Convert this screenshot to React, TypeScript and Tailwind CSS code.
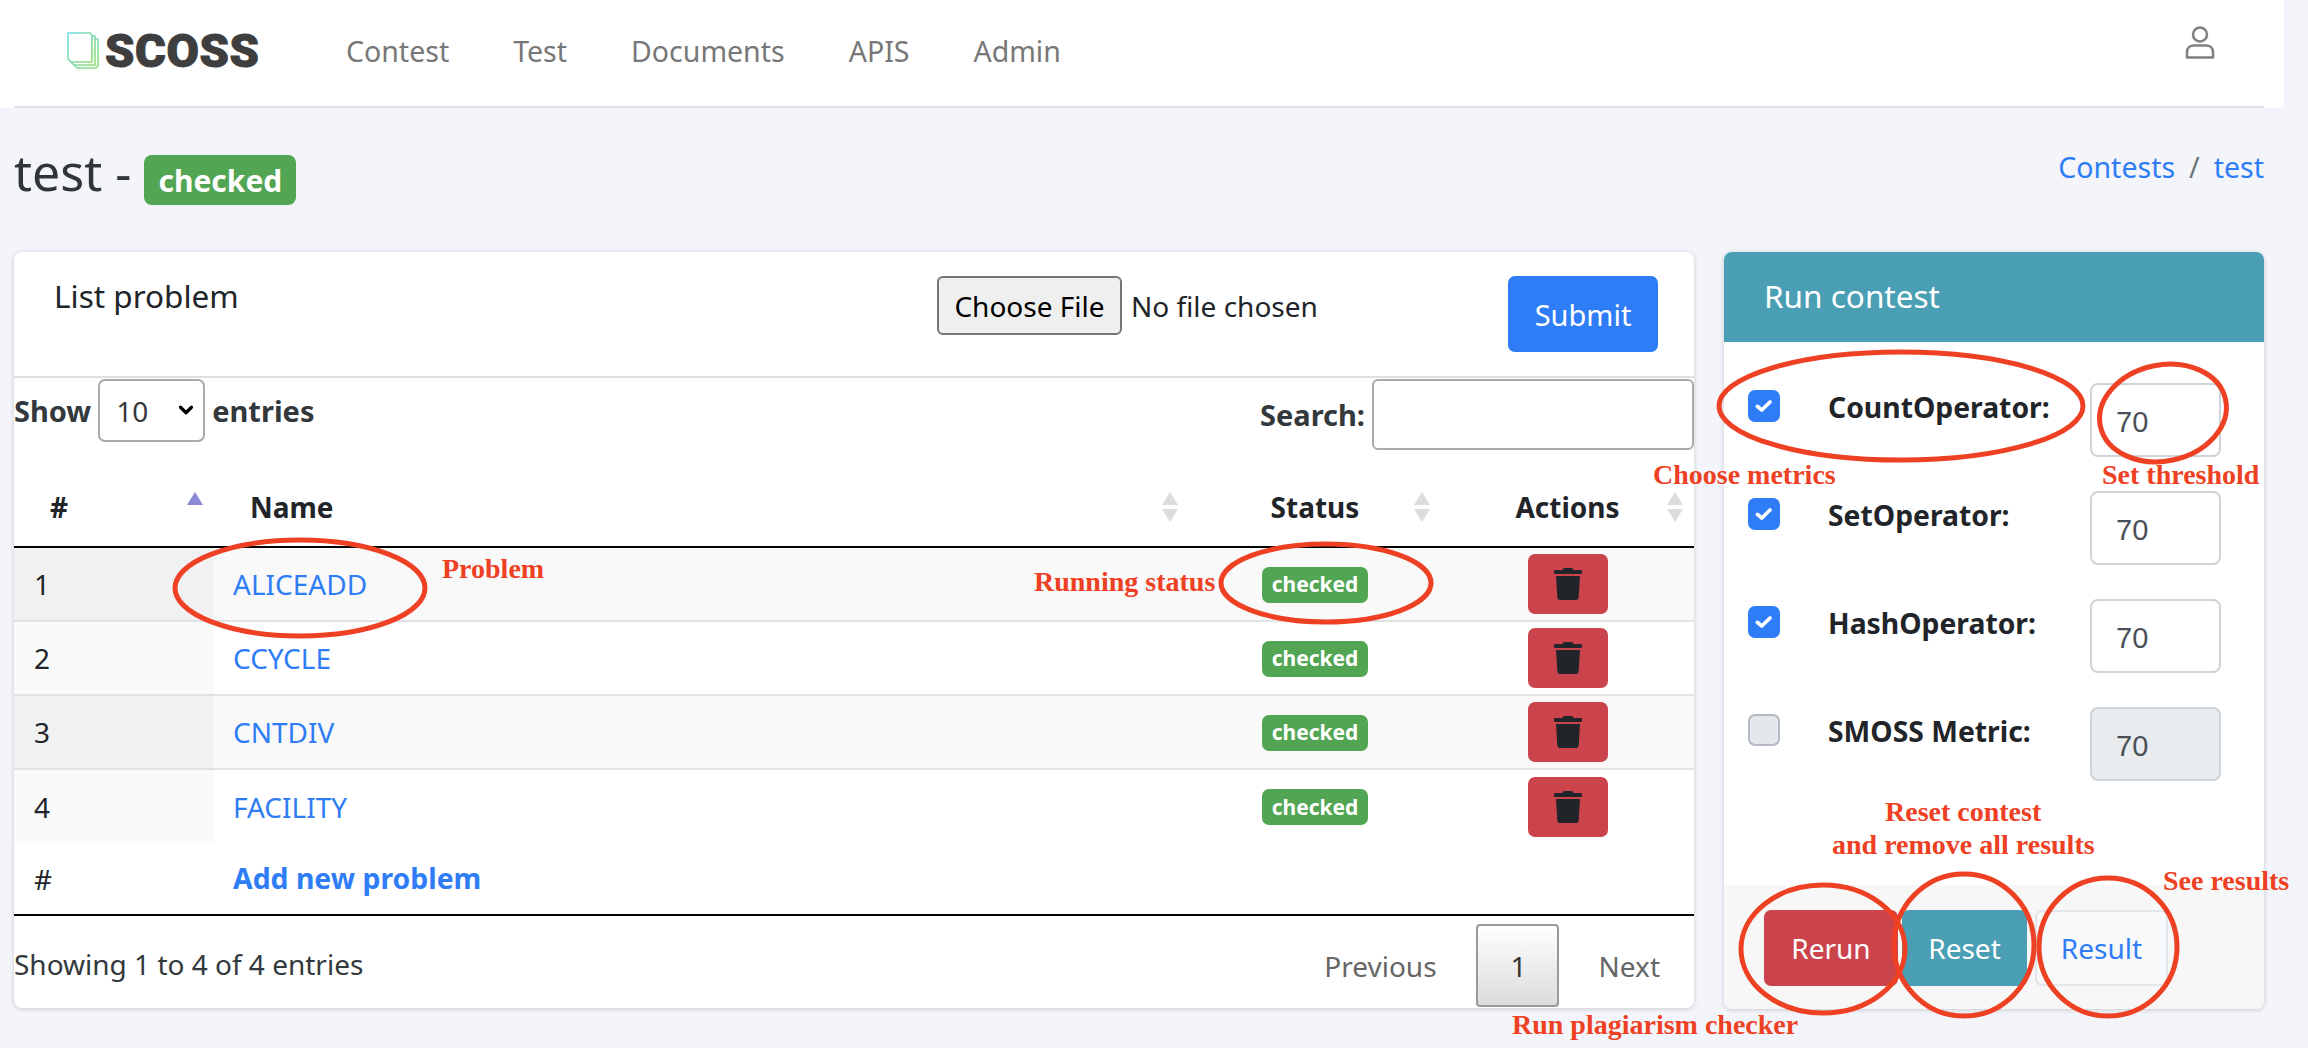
import React from 'react';
import { FaTrash } from 'react-icons/fa';
import { ChevronDown } from 'lucide-react';

const problems = [
  { id: 1, name: 'ALICEADD' },
  { id: 2, name: 'CCYCLE' },
  { id: 3, name: 'CNTDIV' },
  { id: 4, name: 'FACILITY' },
];

const metrics = [
  { label: 'CountOperator:', checked: true },
  { label: 'SetOperator:', checked: true },
  { label: 'HashOperator:', checked: true },
  { label: 'SMOSS Metric:', checked: false },
];

const navItems = ['Contest', 'Test', 'Documents', 'APIS', 'Admin'];

const Logo = () => (
  <div className="flex items-center gap-[6px]">
    <svg width="32" height="37" viewBox="0 0 32 37" fill="none" strokeWidth="1.6">
      <defs>
        <linearGradient id="logoStroke" x1="0" y1="0" x2="1" y2="1">
          <stop offset="0" stopColor="#72d9e6" />
          <stop offset="1" stopColor="#8edf72" />
        </linearGradient>
      </defs>
      <path d="M1 1H23L25 3V30H4L1 27Z" stroke="url(#logoStroke)" />
      <path d="M25 4H28V33H7L4 30" stroke="url(#logoStroke)" />
      <path d="M28 7H31V34L29 36H10L7 33" stroke="url(#logoStroke)" />
    </svg>
    <span className="font-['Roboto',sans-serif] text-[47px] leading-none font-black tracking-[0.6px] text-[#3e3e3e] [-webkit-text-stroke:1px_#3e3e3e]">SCOSS</span>
  </div>
);

const UserIcon = () => (
  <svg width="30" height="33" viewBox="0 0 30 33" fill="none" stroke="#808080" strokeWidth="2.6">
    <circle cx="15" cy="8.5" r="7" />
    <path d="M2 31.5V26C2 22 5 19.5 9 19.5H21C25 19.5 28 22 28 26V31.5Z" strokeLinejoin="round" />
  </svg>
);

const SortArrows = ({ active }: { active?: boolean }) => (
  <svg
    className="absolute top-[39px] right-[11px]"
    width="16"
    height="30"
    viewBox="0 0 16 30"
  >
    <path d="M8 0L16 13H0Z" fill={active ? '#8a8ad6' : '#dddddd'} />
    {!active && <path d="M8 30L16 17H0Z" fill="#dddddd" />}
  </svg>
);

const Badge = () => (
  <span className="inline-flex h-[36px] w-[106px] items-center justify-center rounded-[7px] bg-[#52a552] align-middle text-[21px] font-bold text-white">
    checked
  </span>
);

const Checkbox = ({ checked }: { checked: boolean }) =>
  checked ? (
    <span className="flex h-[32px] w-[32px] items-center justify-center rounded-[7px] bg-[#2f7df6]">
      <svg width="18" height="14" viewBox="0 0 18 14" fill="none" stroke="white" strokeWidth="3.6" strokeLinecap="round" strokeLinejoin="round">
        <path d="M2.5 7.5L6.8 11L15 3" />
      </svg>
    </span>
  ) : (
    <span className="block h-[32px] w-[32px] rounded-[7px] border-2 border-[#b4bac3] bg-[#e4e7ec]" />
  );

const Annotation = ({ className, children }: { className: string; children: React.ReactNode }) => (
  <span className={`absolute font-['Liberation_Serif',serif] text-[28px] leading-[36px] font-bold whitespace-nowrap text-[#ee4023] ${className}`}>
    {children}
  </span>
);

const App: React.FC = () => {
  return (
    <div className="relative h-[1048px] overflow-hidden bg-[#f4f5fa] font-['Noto_Sans',sans-serif] text-[#212529]">
      {/* navbar */}
      <header className="w-[2284px] bg-white pl-[14px] pr-[20px]">
        <div className="flex h-[108px] items-start border-b-2 border-[#e0e1e4]">
          <div className="ml-[53px] mt-[27px] w-[197px] shrink-0">
            <Logo />
          </div>
          <nav className="ml-[82px] mt-[30px] flex gap-[64px] text-[28.5px] leading-[42px] text-[#777777]">
            {navItems.map((item) => (
              <a key={item}>{item}</a>
            ))}
          </nav>
          <div className="ml-auto mr-[49px] mt-[26px]">
            <UserIcon />
          </div>
        </div>
      </header>

      <main className="pl-[14px] pr-[44px]">
        {/* title */}
        <div className="flex h-[144px] items-start justify-between">
          <div className="flex items-start gap-[13px]">
            <h1 className="mt-[33px] text-[50px] leading-[62px] text-[#2f353b]">test -</h1>
            <span className="mt-[47px] flex h-[50px] w-[152px] items-center justify-center rounded-[8px] bg-[#52a552] text-[30px] font-bold text-white">
              checked
            </span>
          </div>
          <div className="mt-[38px] flex gap-[14px] text-[28.5px] leading-[42px] text-[#2f7df6]">
            <a>Contests</a>
            <span className="text-[#6c757d]">/</span>
            <a>test</a>
          </div>
        </div>

        <div className="flex gap-[30px]">
          {/* problem list */}
          <section className="h-[756px] w-[1680px] rounded-[8px] bg-white shadow-[0_1px_5px_rgba(0,0,0,0.18)]">
            <div className="flex h-[126px] items-start border-b-2 border-[#e0e0e0]">
              <h2 className="ml-[40px] mt-[23px] w-[183px] whitespace-nowrap text-[31.5px] leading-[42px]">List problem</h2>
              <button className="ml-[700px] mt-[24px] h-[59px] w-[185px] rounded-[6px] border-2 border-[#767676] bg-[#efefef] text-[28px] text-black">
                Choose File
              </button>
              <span className="ml-[9px] mt-[33px] text-[28px] leading-[42px] text-[#212529]">No file chosen</span>
              <button className="ml-auto mr-[36px] mt-[24px] h-[76px] w-[150px] rounded-[7px] bg-[#2f7df6] pt-[1px] text-[29px] text-white">
                Submit
              </button>
            </div>

            <div className="flex h-[75px] items-start justify-between">
              <div className="flex items-center gap-[7px] pt-[1px] text-[29px] font-bold text-[#33383d]">
                <span>Show</span>
                <div className="relative">
                  <select
                    defaultValue="10"
                    className="h-[63px] w-[107px] appearance-none rounded-[7px] border-2 border-[#aaaaaa] bg-white pl-[16px] text-[28px] font-normal"
                  >
                    <option>10</option>
                  </select>
                  <ChevronDown className="absolute top-[20px] right-[8px] h-[22px] w-[22px] text-black" strokeWidth={3.5} />
                </div>
                <span>entries</span>
              </div>
              <div className="flex items-center gap-[7px] pt-[1px] text-[29px] font-bold text-[#33383d]">
                <span>Search:</span>
                <input className="h-[71px] w-[322px] rounded-[6px] border-2 border-[#aaaaaa] bg-white" />
              </div>
            </div>

            <table className="w-full table-fixed border-collapse text-[28px]">
              <colgroup>
                <col className="w-[200px]" />
                <col className="w-[975px]" />
                <col className="w-[252px]" />
                <col className="w-[253px]" />
              </colgroup>
              <thead>
                <tr className="h-[94px] border-b-2 border-black text-left font-bold">
                  <th className="relative pl-[36px] pt-[14px]">#<SortArrows active /></th>
                  <th className="relative pl-[36px] pt-[14px]">Name<SortArrows /></th>
                  <th className="relative pt-[14px] text-center">Status<SortArrows /></th>
                  <th className="relative pt-[14px] text-center">Actions<SortArrows /></th>
                </tr>
              </thead>
              <tbody>
                {problems.map((p) => {
                  const odd = p.id % 2 === 1;
                  return (
                    <tr key={p.id} className={`h-[74px] border-b-2 border-[#e2e2e2] last:border-b-0 ${odd ? 'bg-[#f9f9f9]' : 'bg-white'}`}>
                      <td className={`pl-[20px] ${odd ? 'bg-[#f1f1f1]' : 'bg-[#fafafa]'}`}>{p.id}</td>
                      <td className="pl-[19px] text-[#2f7df6]">{p.name}</td>
                      <td className="pb-[5px] text-center"><Badge /></td>
                      <td>
                        <button className="ml-[87px] flex h-[60px] w-[80px] items-center justify-center rounded-[7px] bg-[#cb444b] text-[#212529]">
                          <FaTrash size={32} />
                        </button>
                      </td>
                    </tr>
                  );
                })}
              </tbody>
              <tfoot>
                <tr className="h-[72px] border-b-2 border-black">
                  <td className="pl-[20px]">#</td>
                  <td className="pl-[19px] text-[28.4px] font-bold text-[#2f7df6]">Add new problem</td>
                  <td />
                  <td />
                </tr>
              </tfoot>
            </table>

            <div className="flex items-start justify-between">
              <span className="mt-[27px] text-[28px] leading-[42px] text-[#33383d]">Showing 1 to 4 of 4 entries</span>
              <div className="mt-[8px] flex items-center text-[28px] text-[#666666]">
                <span>Previous</span>
                <span className="ml-[39px] flex h-[83px] w-[83px] items-center justify-center rounded-[4px] border-2 border-[#999999] bg-gradient-to-b from-white to-[#dcdcdc] pl-[3px] text-[#333333]">
                  1
                </span>
                <span className="ml-[40px] mr-[34px]">Next</span>
              </div>
            </div>
          </section>

          {/* run contest */}
          <aside className="flex h-[757px] w-[540px] flex-col overflow-hidden rounded-[8px] bg-white shadow-[0_1px_5px_rgba(0,0,0,0.18)]">
            <div className="flex h-[90px] items-center bg-[#4a9fb5] pb-[2px] pl-[40px] text-[31.5px] text-white">
              Run contest
            </div>
            <div className="flex flex-1 flex-col gap-[34px] pt-[41px]">
              {metrics.map((m) => (
                <div key={m.label} className="flex h-[74px] items-start">
                  <div className="ml-[24px] mt-[7px] shrink-0">
                    <Checkbox checked={m.checked} />
                  </div>
                  <label className="ml-[48px] mt-[3px] w-[262px] shrink-0 text-[28.3px] leading-[42px] font-bold">{m.label}</label>
                  <input
                    readOnly
                    value="70"
                    disabled={!m.checked}
                    className={`h-[74px] w-[131px] rounded-[8px] border-2 border-[#ced4da] pl-[24px] pt-[4px] font-['Liberation_Sans',sans-serif] text-[29px] text-[#495057] ${m.checked ? 'bg-white' : 'bg-[#e9ecef]'}`}
                  />
                </div>
              ))}
            </div>
            <div className="flex h-[124px] items-start gap-[4px] bg-[#f7f7f7] pl-[40px] pt-[25px] text-[28px]">
              <button className="h-[76px] w-[134px] rounded-[7px] bg-[#cb444b] text-white">Rerun</button>
              <button className="h-[76px] w-[125px] rounded-[7px] bg-[#4a9fb5] text-white">Reset</button>
              <button className="ml-[4px] h-[76px] w-[133px] rounded-[7px] border-2 border-[#e3e6ea] bg-[#f8f9fa] text-[#2f7df6]">Result</button>
            </div>
          </aside>
        </div>
      </main>

      {/* hand-drawn review marks on top of the screenshot */}
      <svg className="pointer-events-none absolute top-0 left-0" width="2308" height="1048" fill="none" stroke="#ee4023" strokeWidth="5">
        <ellipse cx="300" cy="588" rx="125" ry="48" />
        <ellipse cx="1326" cy="583" rx="105" ry="39" />
        <ellipse cx="1901" cy="406" rx="182" ry="54" />
        <ellipse cx="2163" cy="413" rx="64" ry="48" transform="rotate(-12 2163 413)" />
        <ellipse cx="1823" cy="949" rx="82" ry="64" />
        <ellipse cx="1964" cy="945" rx="70" ry="71" />
        <ellipse cx="2108" cy="947" rx="69" ry="69" />
      </svg>
      <Annotation className="top-[457px] left-[1653px]">Choose metrics</Annotation>
      <Annotation className="top-[457px] left-[2102px]">Set threshold</Annotation>
      <Annotation className="top-[551px] left-[442px]">Problem</Annotation>
      <Annotation className="top-[564px] left-[1034px]">Running status</Annotation>
      <Annotation className="top-[794px] left-[1885px]">Reset contest</Annotation>
      <Annotation className="top-[827px] left-[1832px]">and remove all results</Annotation>
      <Annotation className="top-[863px] left-[2163px]">See results</Annotation>
      <Annotation className="top-[1007px] left-[1512px]">Run plagiarism checker</Annotation>
    </div>
  );
};

export default App;
